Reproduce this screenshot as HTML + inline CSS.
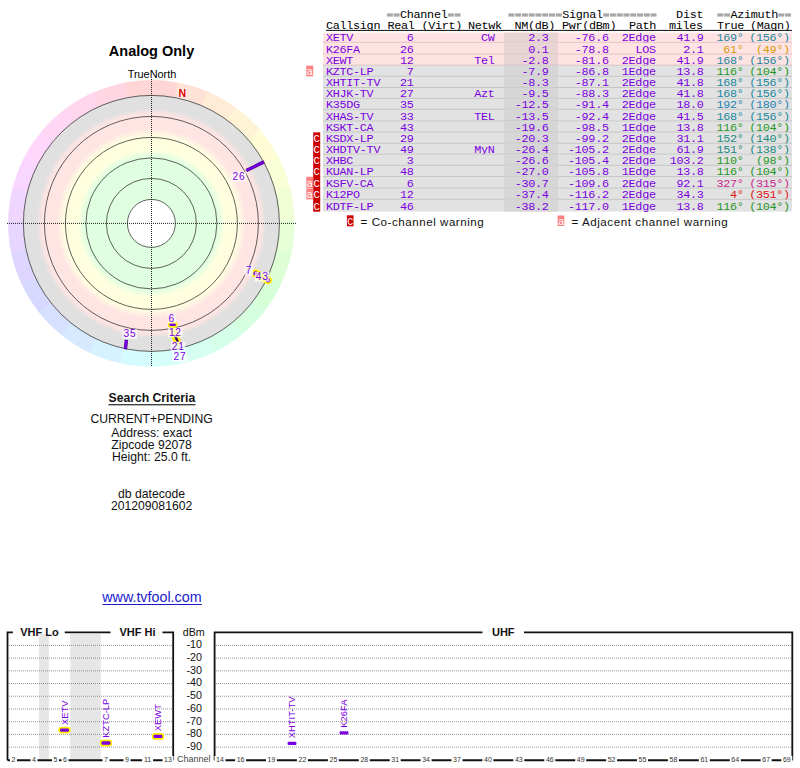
<!DOCTYPE html>
<html><head><meta charset="utf-8"><title>TV Fool</title>
<style>
html,body{margin:0;padding:0;background:#fff;width:800px;height:768px;overflow:hidden}
svg{position:absolute;left:0;top:0}
text{font-family:"Liberation Sans",sans-serif}
.m{font-family:"Liberation Mono",monospace}
</style></head><body>
<svg width="800" height="768" viewBox="0 0 800 768">
<defs>
<radialGradient id="bands" cx="151.4" cy="223.4" r="128" gradientUnits="userSpaceOnUse">
<stop offset="0" stop-color="#e0ffe0"/>
<stop offset="0.523" stop-color="#e0ffe0"/>
<stop offset="0.578" stop-color="#ffffe0"/>
<stop offset="0.68" stop-color="#ffffe0"/>
<stop offset="0.742" stop-color="#ffe4e4"/>
<stop offset="0.852" stop-color="#ffe4e4"/>
<stop offset="0.898" stop-color="#e0e0e0"/>
<stop offset="1" stop-color="#e0e0e0"/>
</radialGradient>
</defs>

<path d="M151.4,223.4 L176.28,82.28 A143.3,143.3 0 0 1 208.43,91.94 Z" fill="hsl(17,100%,92%)"/>
<path d="M151.4,223.4 L207.51,91.54 A143.3,143.3 0 0 1 236.64,108.21 Z" fill="hsl(30,100%,92%)"/>
<path d="M151.4,223.4 L235.83,107.62 A143.3,143.3 0 0 1 260.45,130.43 Z" fill="hsl(43,100%,92%)"/>
<path d="M151.4,223.4 L259.80,129.67 A143.3,143.3 0 0 1 278.62,157.45 Z" fill="hsl(56,100%,92%)"/>
<path d="M151.4,223.4 L278.16,156.57 A143.3,143.3 0 0 1 290.23,187.88 Z" fill="hsl(69,100%,92%)"/>
<path d="M151.4,223.4 L289.98,186.92 A143.3,143.3 0 0 1 294.66,220.15 Z" fill="hsl(82,100%,92%)"/>
<path d="M151.4,223.4 L294.64,219.15 A143.3,143.3 0 0 1 291.70,252.58 Z" fill="hsl(95,100%,92%)"/>
<path d="M151.4,223.4 L291.90,251.60 A143.3,143.3 0 0 1 281.48,283.51 Z" fill="hsl(108,100%,92%)"/>
<path d="M151.4,223.4 L281.90,282.60 A143.3,143.3 0 0 1 264.55,311.33 Z" fill="hsl(121,100%,92%)"/>
<path d="M151.4,223.4 L265.16,310.54 A143.3,143.3 0 0 1 241.78,334.61 Z" fill="hsl(134,100%,92%)"/>
<path d="M151.4,223.4 L242.55,333.97 A143.3,143.3 0 0 1 214.33,352.14 Z" fill="hsl(147,100%,92%)"/>
<path d="M151.4,223.4 L215.23,351.70 A143.3,143.3 0 0 1 183.64,363.03 Z" fill="hsl(160,100%,92%)"/>
<path d="M151.4,223.4 L184.61,362.80 A143.3,143.3 0 0 1 151.27,366.70 Z" fill="hsl(173,100%,92%)"/>
<path d="M151.4,223.4 L152.28,366.70 A143.3,143.3 0 0 1 118.92,362.97 Z" fill="hsl(186,100%,92%)"/>
<path d="M151.4,223.4 L119.90,363.19 A143.3,143.3 0 0 1 88.24,352.03 Z" fill="hsl(199,100%,92%)"/>
<path d="M151.4,223.4 L89.14,352.47 A143.3,143.3 0 0 1 60.83,334.45 Z" fill="hsl(212,100%,92%)"/>
<path d="M151.4,223.4 L61.61,335.08 A143.3,143.3 0 0 1 38.09,311.13 Z" fill="hsl(225,100%,92%)"/>
<path d="M151.4,223.4 L38.71,311.92 A143.3,143.3 0 0 1 21.21,283.28 Z" fill="hsl(238,100%,92%)"/>
<path d="M151.4,223.4 L21.63,284.19 A143.3,143.3 0 0 1 11.05,252.34 Z" fill="hsl(251,100%,92%)"/>
<path d="M151.4,223.4 L11.26,253.32 A143.3,143.3 0 0 1 8.14,219.90 Z" fill="hsl(264,100%,92%)"/>
<path d="M151.4,223.4 L8.12,220.90 A143.3,143.3 0 0 1 12.63,187.64 Z" fill="hsl(278,100%,92%)"/>
<path d="M151.4,223.4 L12.39,188.61 A143.3,143.3 0 0 1 24.29,157.23 Z" fill="hsl(291,100%,92%)"/>
<path d="M151.4,223.4 L23.83,158.12 A143.3,143.3 0 0 1 42.52,130.24 Z" fill="hsl(304,100%,92%)"/>
<path d="M151.4,223.4 L41.87,131.00 A143.3,143.3 0 0 1 66.36,108.06 Z" fill="hsl(317,100%,92%)"/>
<path d="M151.4,223.4 L65.56,108.66 A143.3,143.3 0 0 1 94.60,91.84 Z" fill="hsl(330,100%,92%)"/>
<path d="M151.4,223.4 L93.69,92.24 A143.3,143.3 0 0 1 125.78,82.41 Z" fill="hsl(343,100%,92%)"/>
<path d="M151.4,223.4 L124.79,82.59 A143.3,143.3 0 0 1 177.27,82.45 Z" fill="hsl(360,100%,92%)"/>
<circle cx="151.4" cy="223.4" r="128" fill="url(#bands)"/>
<circle cx="151.4" cy="223.4" r="24" fill="#fff"/>
<circle cx="151.4" cy="223.4" r="24" fill="none" stroke="#3a3a3a" stroke-width="0.8"/>
<circle cx="151.4" cy="223.4" r="45" fill="none" stroke="#3a3a3a" stroke-width="0.8"/>
<circle cx="151.4" cy="223.4" r="65.5" fill="none" stroke="#3a3a3a" stroke-width="0.8"/>
<circle cx="151.4" cy="223.4" r="86" fill="none" stroke="#3a3a3a" stroke-width="0.8"/>
<circle cx="151.4" cy="223.4" r="107" fill="none" stroke="#3a3a3a" stroke-width="0.8"/>
<circle cx="151.4" cy="223.4" r="128" fill="none" stroke="#3a3a3a" stroke-width="0.8"/>
<line x1="7" y1="223.4" x2="296" y2="223.4" stroke="#222" stroke-width="1" stroke-dasharray="1,1"/>
<line x1="151.5" y1="79" x2="151.5" y2="367" stroke="#222" stroke-width="1" stroke-dasharray="1,1"/>
<text x="151.5" y="55.5" text-anchor="middle" font-size="14.5" font-weight="bold">Analog Only</text>
<text x="152" y="77.6" text-anchor="middle" font-size="10.9">TrueNorth</text>
<rect x="178" y="88.6" width="8.8" height="9" fill="#fff" fill-opacity="0.5"/>
<text x="178.6" y="96.9" font-size="10.6" font-weight="bold" fill="#dd0000">N</text>
<line x1="246.3" y1="170.5" x2="264.0" y2="161.9" stroke="#4a0090" stroke-width="3.4" stroke-linecap="butt"/>
<line x1="246.5" y1="170.5" x2="263.8" y2="161.9" stroke="#7a00e0" stroke-width="2.2" stroke-linecap="butt"/>
<rect x="231.6" y="172.0" width="14.7" height="9.7" fill="#fff" fill-opacity="0.7"/>
<text x="232.6" y="180.2" font-size="10.2" letter-spacing="0.7" fill="#7a00e0">26</text>
<line x1="126.4" y1="339.8" x2="125.4" y2="349.2" stroke="#4a0090" stroke-width="3.4" stroke-linecap="butt"/>
<line x1="126.4" y1="340.2" x2="125.4" y2="348.8" stroke="#7a00e0" stroke-width="2.2" stroke-linecap="butt"/>
<rect x="122.6" y="329.2" width="14.7" height="9.7" fill="#fff" fill-opacity="0.7"/>
<text x="123.6" y="337.4" font-size="10.2" letter-spacing="0.7" fill="#7a00e0">35</text>
<line x1="255.3" y1="273.4" x2="268" y2="280.2" stroke="#ffee00" stroke-width="8" stroke-linecap="round"/>
<circle cx="255.4" cy="273.4" r="2.2" fill="#7a00e0"/>
<circle cx="268" cy="280.2" r="2.2" fill="#7a00e0"/>
<rect x="244.8" y="265.8" width="8.4" height="9.7" fill="#fff" fill-opacity="0.7"/>
<text x="245.8" y="274.0" font-size="10.2" letter-spacing="0.7" fill="#7a00e0">7</text>
<rect x="254.8" y="272.0" width="14.7" height="9.7" fill="#fff" fill-opacity="0.7"/>
<text x="255.8" y="280.2" font-size="10.2" letter-spacing="0.7" fill="#7a00e0">43</text>
<line x1="171" y1="324.8" x2="174.2" y2="324.8" stroke="#ffee00" stroke-width="6.5" stroke-linecap="round"/>
<line x1="173.8" y1="332" x2="177.2" y2="341.5" stroke="#ffee00" stroke-width="7.5" stroke-linecap="round"/>
<line x1="170.6" y1="324.8" x2="174.6" y2="324.8" stroke="#7a00e0" stroke-width="2.6" stroke-linecap="round"/>
<line x1="175" y1="336" x2="177.5" y2="341" stroke="#33006a" stroke-width="2.4" stroke-linecap="round"/>
<rect x="167.6" y="313.7" width="8.4" height="9.7" fill="#fff" fill-opacity="0.7"/>
<text x="168.6" y="321.9" font-size="10.2" letter-spacing="0.7" fill="#7a00e0">6</text>
<rect x="168.0" y="327.7" width="14.7" height="9.7" fill="#fff" fill-opacity="0.7"/>
<text x="169.0" y="335.9" font-size="10.2" letter-spacing="0.7" fill="#7a00e0">12</text>
<rect x="170.8" y="341.6" width="14.7" height="9.7" fill="#fff" fill-opacity="0.7"/>
<text x="171.8" y="349.8" font-size="10.2" letter-spacing="0.7" fill="#7a00e0">21</text>
<rect x="172.6" y="352.0" width="14.7" height="9.7" fill="#fff" fill-opacity="0.7"/>
<text x="173.6" y="360.2" font-size="10.2" letter-spacing="0.7" fill="#7a00e0">27</text>
<rect x="386.90" y="13.4" width="5.97" height="3.2" fill="#a8a8a8"/>
<rect x="393.67" y="13.4" width="5.97" height="3.2" fill="#a8a8a8"/>
<text class="m" x="400.04" y="17.60" font-size="11.8" letter-spacing="-0.31" fill="#000" text-anchor="start">Channel</text>
<rect x="447.83" y="13.4" width="5.97" height="3.2" fill="#a8a8a8"/>
<rect x="454.60" y="13.4" width="5.97" height="3.2" fill="#a8a8a8"/>
<rect x="508.40" y="13.4" width="5.97" height="3.2" fill="#a8a8a8"/>
<rect x="515.17" y="13.4" width="5.97" height="3.2" fill="#a8a8a8"/>
<rect x="521.94" y="13.4" width="5.97" height="3.2" fill="#a8a8a8"/>
<rect x="528.71" y="13.4" width="5.97" height="3.2" fill="#a8a8a8"/>
<rect x="535.48" y="13.4" width="5.97" height="3.2" fill="#a8a8a8"/>
<rect x="542.25" y="13.4" width="5.97" height="3.2" fill="#a8a8a8"/>
<rect x="549.02" y="13.4" width="5.97" height="3.2" fill="#a8a8a8"/>
<rect x="555.79" y="13.4" width="5.97" height="3.2" fill="#a8a8a8"/>
<text class="m" x="562.16" y="17.60" font-size="11.8" letter-spacing="-0.31" fill="#000" text-anchor="start">Signal</text>
<rect x="603.18" y="13.4" width="5.97" height="3.2" fill="#a8a8a8"/>
<rect x="609.95" y="13.4" width="5.97" height="3.2" fill="#a8a8a8"/>
<rect x="616.72" y="13.4" width="5.97" height="3.2" fill="#a8a8a8"/>
<rect x="623.49" y="13.4" width="5.97" height="3.2" fill="#a8a8a8"/>
<rect x="630.26" y="13.4" width="5.97" height="3.2" fill="#a8a8a8"/>
<rect x="637.03" y="13.4" width="5.97" height="3.2" fill="#a8a8a8"/>
<rect x="643.80" y="13.4" width="5.97" height="3.2" fill="#a8a8a8"/>
<rect x="650.57" y="13.4" width="5.97" height="3.2" fill="#a8a8a8"/>
<text class="m" x="703.19" y="17.60" font-size="11.8" letter-spacing="-0.31" fill="#000" text-anchor="end">Dist</text>
<rect x="717.40" y="13.4" width="5.97" height="3.2" fill="#a8a8a8"/>
<rect x="724.17" y="13.4" width="5.97" height="3.2" fill="#a8a8a8"/>
<text class="m" x="730.54" y="17.60" font-size="11.8" letter-spacing="-0.31" fill="#000" text-anchor="start">Azimuth</text>
<rect x="778.33" y="13.4" width="5.97" height="3.2" fill="#a8a8a8"/>
<rect x="785.10" y="13.4" width="5.97" height="3.2" fill="#a8a8a8"/>
<text class="m" x="326.00" y="28.70" font-size="11.8" letter-spacing="-0.31" fill="#000" text-anchor="start">Callsign</text>
<text class="m" x="387.50" y="28.70" font-size="11.8" letter-spacing="-0.31" fill="#000" text-anchor="start">Real</text>
<text class="m" x="421.50" y="28.70" font-size="11.8" letter-spacing="-0.31" fill="#000" text-anchor="start">(Virt)</text>
<text class="m" x="468.00" y="28.70" font-size="11.8" letter-spacing="-0.31" fill="#000" text-anchor="start">Netwk</text>
<text class="m" x="514.50" y="28.70" font-size="11.8" letter-spacing="-0.31" fill="#000" text-anchor="start">NM(dB)</text>
<text class="m" x="562.00" y="28.70" font-size="11.8" letter-spacing="-0.31" fill="#000" text-anchor="start">Pwr(dBm)</text>
<text class="m" x="629.00" y="28.70" font-size="11.8" letter-spacing="-0.31" fill="#000" text-anchor="start">Path</text>
<text class="m" x="669.00" y="28.70" font-size="11.8" letter-spacing="-0.31" fill="#000" text-anchor="start">miles</text>
<text class="m" x="717.00" y="28.70" font-size="11.8" letter-spacing="-0.31" fill="#000" text-anchor="start">True</text>
<text class="m" x="750.00" y="28.70" font-size="11.8" letter-spacing="-0.31" fill="#000" text-anchor="start">(Magn)</text>
<rect x="326" y="29.9" width="466" height="1.1" fill="#222"/>
<rect x="323" y="32.65" width="469" height="10.25" fill="#ffe2e2"/>
<rect x="504" y="32.65" width="54" height="10.25" fill="#e8d4d4"/>
<rect x="323" y="41.90" width="469" height="1.1" fill="#c4aaaa"/>
<text class="m" x="326.00" y="41.10" font-size="11.8" letter-spacing="-0.31" fill="#7a00e0" text-anchor="start">XETV</text>
<text class="m" x="413.49" y="41.10" font-size="11.8" letter-spacing="-0.31" fill="#7a00e0" text-anchor="end">6</text>
<text class="m" x="494.49" y="41.10" font-size="11.8" letter-spacing="-0.31" fill="#7a00e0" text-anchor="end">CW</text>
<text class="m" x="548.49" y="41.10" font-size="11.8" letter-spacing="-0.31" fill="#7a00e0" text-anchor="end">2.3</text>
<text class="m" x="608.69" y="41.10" font-size="11.8" letter-spacing="-0.31" fill="#7a00e0" text-anchor="end">-76.6</text>
<text class="m" x="655.69" y="41.10" font-size="11.8" letter-spacing="-0.31" fill="#7a00e0" text-anchor="end">2Edge</text>
<text class="m" x="703.49" y="41.10" font-size="11.8" letter-spacing="-0.31" fill="#7a00e0" text-anchor="end">41.9</text>
<text class="m" x="743.49" y="41.10" font-size="11.8" letter-spacing="-0.31" fill="#2088a0" text-anchor="end">169°</text>
<text class="m" x="789.89" y="41.10" font-size="11.8" letter-spacing="-0.31" fill="#2088a0" text-anchor="end">(156°)</text>
<rect x="323" y="42.40" width="469" height="12.40" fill="#ffe2e2"/>
<rect x="504" y="42.40" width="54" height="12.40" fill="#e8d4d4"/>
<rect x="323" y="53.80" width="469" height="1.1" fill="#c4aaaa"/>
<text class="m" x="326.00" y="53.00" font-size="11.8" letter-spacing="-0.31" fill="#7a00e0" text-anchor="start">K26FA</text>
<text class="m" x="413.49" y="53.00" font-size="11.8" letter-spacing="-0.31" fill="#7a00e0" text-anchor="end">26</text>
<text class="m" x="548.49" y="53.00" font-size="11.8" letter-spacing="-0.31" fill="#7a00e0" text-anchor="end">0.1</text>
<text class="m" x="608.69" y="53.00" font-size="11.8" letter-spacing="-0.31" fill="#7a00e0" text-anchor="end">-78.8</text>
<text class="m" x="655.69" y="53.00" font-size="11.8" letter-spacing="-0.31" fill="#7a00e0" text-anchor="end">LOS</text>
<text class="m" x="703.49" y="53.00" font-size="11.8" letter-spacing="-0.31" fill="#7a00e0" text-anchor="end">2.1</text>
<text class="m" x="743.49" y="53.00" font-size="11.8" letter-spacing="-0.31" fill="#d49a00" text-anchor="end">61°</text>
<text class="m" x="789.89" y="53.00" font-size="11.8" letter-spacing="-0.31" fill="#d49a00" text-anchor="end">(49°)</text>
<rect x="323" y="54.30" width="469" height="11.50" fill="#ffe2e2"/>
<rect x="504" y="54.30" width="54" height="11.50" fill="#e8d4d4"/>
<rect x="323" y="64.80" width="469" height="1.1" fill="#c4aaaa"/>
<text class="m" x="326.00" y="64.00" font-size="11.8" letter-spacing="-0.31" fill="#7a00e0" text-anchor="start">XEWT</text>
<text class="m" x="413.49" y="64.00" font-size="11.8" letter-spacing="-0.31" fill="#7a00e0" text-anchor="end">12</text>
<text class="m" x="494.49" y="64.00" font-size="11.8" letter-spacing="-0.31" fill="#7a00e0" text-anchor="end">Tel</text>
<text class="m" x="548.49" y="64.00" font-size="11.8" letter-spacing="-0.31" fill="#7a00e0" text-anchor="end">-2.8</text>
<text class="m" x="608.69" y="64.00" font-size="11.8" letter-spacing="-0.31" fill="#7a00e0" text-anchor="end">-81.6</text>
<text class="m" x="655.69" y="64.00" font-size="11.8" letter-spacing="-0.31" fill="#7a00e0" text-anchor="end">2Edge</text>
<text class="m" x="703.49" y="64.00" font-size="11.8" letter-spacing="-0.31" fill="#7a00e0" text-anchor="end">41.9</text>
<text class="m" x="743.49" y="64.00" font-size="11.8" letter-spacing="-0.31" fill="#2088a0" text-anchor="end">168°</text>
<text class="m" x="789.89" y="64.00" font-size="11.8" letter-spacing="-0.31" fill="#2088a0" text-anchor="end">(156°)</text>
<rect x="323" y="65.30" width="469" height="11.55" fill="#e2e2e2"/>
<rect x="504" y="65.30" width="54" height="11.55" fill="#d6d6d6"/>
<rect x="323" y="75.85" width="469" height="1.1" fill="#adadad"/>
<text class="m" x="326.00" y="75.05" font-size="11.8" letter-spacing="-0.31" fill="#7a00e0" text-anchor="start">KZTC-LP</text>
<text class="m" x="413.49" y="75.05" font-size="11.8" letter-spacing="-0.31" fill="#7a00e0" text-anchor="end">7</text>
<text class="m" x="548.49" y="75.05" font-size="11.8" letter-spacing="-0.31" fill="#7a00e0" text-anchor="end">-7.9</text>
<text class="m" x="608.69" y="75.05" font-size="11.8" letter-spacing="-0.31" fill="#7a00e0" text-anchor="end">-86.8</text>
<text class="m" x="655.69" y="75.05" font-size="11.8" letter-spacing="-0.31" fill="#7a00e0" text-anchor="end">1Edge</text>
<text class="m" x="703.49" y="75.05" font-size="11.8" letter-spacing="-0.31" fill="#7a00e0" text-anchor="end">13.8</text>
<text class="m" x="743.49" y="75.05" font-size="11.8" letter-spacing="-0.31" fill="#1e961e" text-anchor="end">116°</text>
<text class="m" x="789.89" y="75.05" font-size="11.8" letter-spacing="-0.31" fill="#1e961e" text-anchor="end">(104°)</text>
<rect x="306.3" y="65.60" width="6.9" height="10.75" fill="#ff8080"/>
<text x="306.8" y="75.05" font-size="10.5" fill="#fff">a</text>
<rect x="323" y="76.35" width="469" height="11.75" fill="#e2e2e2"/>
<rect x="504" y="76.35" width="54" height="11.75" fill="#d6d6d6"/>
<rect x="323" y="87.10" width="469" height="1.1" fill="#adadad"/>
<text class="m" x="326.00" y="86.30" font-size="11.8" letter-spacing="-0.31" fill="#7a00e0" text-anchor="start">XHTIT-TV</text>
<text class="m" x="413.49" y="86.30" font-size="11.8" letter-spacing="-0.31" fill="#7a00e0" text-anchor="end">21</text>
<text class="m" x="548.49" y="86.30" font-size="11.8" letter-spacing="-0.31" fill="#7a00e0" text-anchor="end">-8.3</text>
<text class="m" x="608.69" y="86.30" font-size="11.8" letter-spacing="-0.31" fill="#7a00e0" text-anchor="end">-87.1</text>
<text class="m" x="655.69" y="86.30" font-size="11.8" letter-spacing="-0.31" fill="#7a00e0" text-anchor="end">2Edge</text>
<text class="m" x="703.49" y="86.30" font-size="11.8" letter-spacing="-0.31" fill="#7a00e0" text-anchor="end">41.8</text>
<text class="m" x="743.49" y="86.30" font-size="11.8" letter-spacing="-0.31" fill="#2088a0" text-anchor="end">168°</text>
<text class="m" x="789.89" y="86.30" font-size="11.8" letter-spacing="-0.31" fill="#2088a0" text-anchor="end">(156°)</text>
<rect x="323" y="87.60" width="469" height="11.30" fill="#e2e2e2"/>
<rect x="504" y="87.60" width="54" height="11.30" fill="#d6d6d6"/>
<rect x="323" y="97.90" width="469" height="1.1" fill="#adadad"/>
<text class="m" x="326.00" y="97.10" font-size="11.8" letter-spacing="-0.31" fill="#7a00e0" text-anchor="start">XHJK-TV</text>
<text class="m" x="413.49" y="97.10" font-size="11.8" letter-spacing="-0.31" fill="#7a00e0" text-anchor="end">27</text>
<text class="m" x="494.49" y="97.10" font-size="11.8" letter-spacing="-0.31" fill="#7a00e0" text-anchor="end">Azt</text>
<text class="m" x="548.49" y="97.10" font-size="11.8" letter-spacing="-0.31" fill="#7a00e0" text-anchor="end">-9.5</text>
<text class="m" x="608.69" y="97.10" font-size="11.8" letter-spacing="-0.31" fill="#7a00e0" text-anchor="end">-88.3</text>
<text class="m" x="655.69" y="97.10" font-size="11.8" letter-spacing="-0.31" fill="#7a00e0" text-anchor="end">2Edge</text>
<text class="m" x="703.49" y="97.10" font-size="11.8" letter-spacing="-0.31" fill="#7a00e0" text-anchor="end">41.8</text>
<text class="m" x="743.49" y="97.10" font-size="11.8" letter-spacing="-0.31" fill="#2088a0" text-anchor="end">168°</text>
<text class="m" x="789.89" y="97.10" font-size="11.8" letter-spacing="-0.31" fill="#2088a0" text-anchor="end">(156°)</text>
<rect x="323" y="98.40" width="469" height="11.50" fill="#e2e2e2"/>
<rect x="504" y="98.40" width="54" height="11.50" fill="#d6d6d6"/>
<rect x="323" y="108.90" width="469" height="1.1" fill="#adadad"/>
<text class="m" x="326.00" y="108.10" font-size="11.8" letter-spacing="-0.31" fill="#7a00e0" text-anchor="start">K35DG</text>
<text class="m" x="413.49" y="108.10" font-size="11.8" letter-spacing="-0.31" fill="#7a00e0" text-anchor="end">35</text>
<text class="m" x="548.49" y="108.10" font-size="11.8" letter-spacing="-0.31" fill="#7a00e0" text-anchor="end">-12.5</text>
<text class="m" x="608.69" y="108.10" font-size="11.8" letter-spacing="-0.31" fill="#7a00e0" text-anchor="end">-91.4</text>
<text class="m" x="655.69" y="108.10" font-size="11.8" letter-spacing="-0.31" fill="#7a00e0" text-anchor="end">2Edge</text>
<text class="m" x="703.49" y="108.10" font-size="11.8" letter-spacing="-0.31" fill="#7a00e0" text-anchor="end">18.0</text>
<text class="m" x="743.49" y="108.10" font-size="11.8" letter-spacing="-0.31" fill="#1f7fb0" text-anchor="end">192°</text>
<text class="m" x="789.89" y="108.10" font-size="11.8" letter-spacing="-0.31" fill="#1f7fb0" text-anchor="end">(180°)</text>
<rect x="323" y="109.40" width="469" height="12.35" fill="#e2e2e2"/>
<rect x="504" y="109.40" width="54" height="12.35" fill="#d6d6d6"/>
<rect x="323" y="120.75" width="469" height="1.1" fill="#adadad"/>
<text class="m" x="326.00" y="119.95" font-size="11.8" letter-spacing="-0.31" fill="#7a00e0" text-anchor="start">XHAS-TV</text>
<text class="m" x="413.49" y="119.95" font-size="11.8" letter-spacing="-0.31" fill="#7a00e0" text-anchor="end">33</text>
<text class="m" x="494.49" y="119.95" font-size="11.8" letter-spacing="-0.31" fill="#7a00e0" text-anchor="end">TEL</text>
<text class="m" x="548.49" y="119.95" font-size="11.8" letter-spacing="-0.31" fill="#7a00e0" text-anchor="end">-13.5</text>
<text class="m" x="608.69" y="119.95" font-size="11.8" letter-spacing="-0.31" fill="#7a00e0" text-anchor="end">-92.4</text>
<text class="m" x="655.69" y="119.95" font-size="11.8" letter-spacing="-0.31" fill="#7a00e0" text-anchor="end">2Edge</text>
<text class="m" x="703.49" y="119.95" font-size="11.8" letter-spacing="-0.31" fill="#7a00e0" text-anchor="end">41.5</text>
<text class="m" x="743.49" y="119.95" font-size="11.8" letter-spacing="-0.31" fill="#2088a0" text-anchor="end">168°</text>
<text class="m" x="789.89" y="119.95" font-size="11.8" letter-spacing="-0.31" fill="#2088a0" text-anchor="end">(156°)</text>
<rect x="323" y="121.25" width="469" height="11.55" fill="#e2e2e2"/>
<rect x="504" y="121.25" width="54" height="11.55" fill="#d6d6d6"/>
<rect x="323" y="131.80" width="469" height="1.1" fill="#adadad"/>
<text class="m" x="326.00" y="131.00" font-size="11.8" letter-spacing="-0.31" fill="#7a00e0" text-anchor="start">KSKT-CA</text>
<text class="m" x="413.49" y="131.00" font-size="11.8" letter-spacing="-0.31" fill="#7a00e0" text-anchor="end">43</text>
<text class="m" x="548.49" y="131.00" font-size="11.8" letter-spacing="-0.31" fill="#7a00e0" text-anchor="end">-19.6</text>
<text class="m" x="608.69" y="131.00" font-size="11.8" letter-spacing="-0.31" fill="#7a00e0" text-anchor="end">-98.5</text>
<text class="m" x="655.69" y="131.00" font-size="11.8" letter-spacing="-0.31" fill="#7a00e0" text-anchor="end">1Edge</text>
<text class="m" x="703.49" y="131.00" font-size="11.8" letter-spacing="-0.31" fill="#7a00e0" text-anchor="end">13.8</text>
<text class="m" x="743.49" y="131.00" font-size="11.8" letter-spacing="-0.31" fill="#1e961e" text-anchor="end">116°</text>
<text class="m" x="789.89" y="131.00" font-size="11.8" letter-spacing="-0.31" fill="#1e961e" text-anchor="end">(104°)</text>
<rect x="323" y="132.30" width="469" height="11.60" fill="#e2e2e2"/>
<rect x="504" y="132.30" width="54" height="11.60" fill="#d6d6d6"/>
<rect x="323" y="142.90" width="469" height="1.1" fill="#adadad"/>
<text class="m" x="326.00" y="142.10" font-size="11.8" letter-spacing="-0.31" fill="#7a00e0" text-anchor="start">KSDX-LP</text>
<text class="m" x="413.49" y="142.10" font-size="11.8" letter-spacing="-0.31" fill="#7a00e0" text-anchor="end">29</text>
<text class="m" x="548.49" y="142.10" font-size="11.8" letter-spacing="-0.31" fill="#7a00e0" text-anchor="end">-20.3</text>
<text class="m" x="608.69" y="142.10" font-size="11.8" letter-spacing="-0.31" fill="#7a00e0" text-anchor="end">-99.2</text>
<text class="m" x="655.69" y="142.10" font-size="11.8" letter-spacing="-0.31" fill="#7a00e0" text-anchor="end">2Edge</text>
<text class="m" x="703.49" y="142.10" font-size="11.8" letter-spacing="-0.31" fill="#7a00e0" text-anchor="end">31.1</text>
<text class="m" x="743.49" y="142.10" font-size="11.8" letter-spacing="-0.31" fill="#1a8c7c" text-anchor="end">152°</text>
<text class="m" x="789.89" y="142.10" font-size="11.8" letter-spacing="-0.31" fill="#1a8c7c" text-anchor="end">(140°)</text>
<rect x="313.2" y="132.30" width="7" height="11.70" fill="#cc0000"/>
<text class="m" x="313.50" y="142.10" font-size="10.5" letter-spacing="0" fill="#fff" text-anchor="start">C</text>
<rect x="323" y="143.40" width="469" height="11.40" fill="#e2e2e2"/>
<rect x="504" y="143.40" width="54" height="11.40" fill="#d6d6d6"/>
<rect x="323" y="153.80" width="469" height="1.1" fill="#adadad"/>
<text class="m" x="326.00" y="153.00" font-size="11.8" letter-spacing="-0.31" fill="#7a00e0" text-anchor="start">XHDTV-TV</text>
<text class="m" x="413.49" y="153.00" font-size="11.8" letter-spacing="-0.31" fill="#7a00e0" text-anchor="end">49</text>
<text class="m" x="494.49" y="153.00" font-size="11.8" letter-spacing="-0.31" fill="#7a00e0" text-anchor="end">MyN</text>
<text class="m" x="548.49" y="153.00" font-size="11.8" letter-spacing="-0.31" fill="#7a00e0" text-anchor="end">-26.4</text>
<text class="m" x="608.69" y="153.00" font-size="11.8" letter-spacing="-0.31" fill="#7a00e0" text-anchor="end">-105.2</text>
<text class="m" x="655.69" y="153.00" font-size="11.8" letter-spacing="-0.31" fill="#7a00e0" text-anchor="end">2Edge</text>
<text class="m" x="703.49" y="153.00" font-size="11.8" letter-spacing="-0.31" fill="#7a00e0" text-anchor="end">61.9</text>
<text class="m" x="743.49" y="153.00" font-size="11.8" letter-spacing="-0.31" fill="#1a8c7c" text-anchor="end">151°</text>
<text class="m" x="789.89" y="153.00" font-size="11.8" letter-spacing="-0.31" fill="#1a8c7c" text-anchor="end">(138°)</text>
<rect x="313.2" y="143.40" width="7" height="11.50" fill="#cc0000"/>
<text class="m" x="313.50" y="153.00" font-size="10.5" letter-spacing="0" fill="#fff" text-anchor="start">C</text>
<rect x="323" y="154.30" width="469" height="11.60" fill="#e2e2e2"/>
<rect x="504" y="154.30" width="54" height="11.60" fill="#d6d6d6"/>
<rect x="323" y="164.90" width="469" height="1.1" fill="#adadad"/>
<text class="m" x="326.00" y="164.10" font-size="11.8" letter-spacing="-0.31" fill="#7a00e0" text-anchor="start">XHBC</text>
<text class="m" x="413.49" y="164.10" font-size="11.8" letter-spacing="-0.31" fill="#7a00e0" text-anchor="end">3</text>
<text class="m" x="548.49" y="164.10" font-size="11.8" letter-spacing="-0.31" fill="#7a00e0" text-anchor="end">-26.6</text>
<text class="m" x="608.69" y="164.10" font-size="11.8" letter-spacing="-0.31" fill="#7a00e0" text-anchor="end">-105.4</text>
<text class="m" x="655.69" y="164.10" font-size="11.8" letter-spacing="-0.31" fill="#7a00e0" text-anchor="end">2Edge</text>
<text class="m" x="703.49" y="164.10" font-size="11.8" letter-spacing="-0.31" fill="#7a00e0" text-anchor="end">103.2</text>
<text class="m" x="743.49" y="164.10" font-size="11.8" letter-spacing="-0.31" fill="#1e961e" text-anchor="end">110°</text>
<text class="m" x="789.89" y="164.10" font-size="11.8" letter-spacing="-0.31" fill="#1e961e" text-anchor="end">(98°)</text>
<rect x="313.2" y="154.30" width="7" height="11.70" fill="#cc0000"/>
<text class="m" x="313.50" y="164.10" font-size="10.5" letter-spacing="0" fill="#fff" text-anchor="start">C</text>
<rect x="323" y="165.40" width="469" height="11.60" fill="#e2e2e2"/>
<rect x="504" y="165.40" width="54" height="11.60" fill="#d6d6d6"/>
<rect x="323" y="176.00" width="469" height="1.1" fill="#adadad"/>
<text class="m" x="326.00" y="175.20" font-size="11.8" letter-spacing="-0.31" fill="#7a00e0" text-anchor="start">KUAN-LP</text>
<text class="m" x="413.49" y="175.20" font-size="11.8" letter-spacing="-0.31" fill="#7a00e0" text-anchor="end">48</text>
<text class="m" x="548.49" y="175.20" font-size="11.8" letter-spacing="-0.31" fill="#7a00e0" text-anchor="end">-27.0</text>
<text class="m" x="608.69" y="175.20" font-size="11.8" letter-spacing="-0.31" fill="#7a00e0" text-anchor="end">-105.8</text>
<text class="m" x="655.69" y="175.20" font-size="11.8" letter-spacing="-0.31" fill="#7a00e0" text-anchor="end">1Edge</text>
<text class="m" x="703.49" y="175.20" font-size="11.8" letter-spacing="-0.31" fill="#7a00e0" text-anchor="end">13.8</text>
<text class="m" x="743.49" y="175.20" font-size="11.8" letter-spacing="-0.31" fill="#1e961e" text-anchor="end">116°</text>
<text class="m" x="789.89" y="175.20" font-size="11.8" letter-spacing="-0.31" fill="#1e961e" text-anchor="end">(104°)</text>
<rect x="313.2" y="165.40" width="7" height="11.70" fill="#cc0000"/>
<text class="m" x="313.50" y="175.20" font-size="10.5" letter-spacing="0" fill="#fff" text-anchor="start">C</text>
<rect x="323" y="176.50" width="469" height="12.30" fill="#e2e2e2"/>
<rect x="504" y="176.50" width="54" height="12.30" fill="#d6d6d6"/>
<rect x="323" y="187.80" width="469" height="1.1" fill="#adadad"/>
<text class="m" x="326.00" y="187.00" font-size="11.8" letter-spacing="-0.31" fill="#7a00e0" text-anchor="start">KSFV-CA</text>
<text class="m" x="413.49" y="187.00" font-size="11.8" letter-spacing="-0.31" fill="#7a00e0" text-anchor="end">6</text>
<text class="m" x="548.49" y="187.00" font-size="11.8" letter-spacing="-0.31" fill="#7a00e0" text-anchor="end">-30.7</text>
<text class="m" x="608.69" y="187.00" font-size="11.8" letter-spacing="-0.31" fill="#7a00e0" text-anchor="end">-109.6</text>
<text class="m" x="655.69" y="187.00" font-size="11.8" letter-spacing="-0.31" fill="#7a00e0" text-anchor="end">2Edge</text>
<text class="m" x="703.49" y="187.00" font-size="11.8" letter-spacing="-0.31" fill="#7a00e0" text-anchor="end">92.1</text>
<text class="m" x="743.49" y="187.00" font-size="11.8" letter-spacing="-0.31" fill="#c81e8c" text-anchor="end">327°</text>
<text class="m" x="789.89" y="187.00" font-size="11.8" letter-spacing="-0.31" fill="#c81e8c" text-anchor="end">(315°)</text>
<rect x="313.2" y="176.50" width="7" height="12.40" fill="#cc0000"/>
<text class="m" x="313.50" y="187.00" font-size="10.5" letter-spacing="0" fill="#fff" text-anchor="start">C</text>
<rect x="306.3" y="176.80" width="6.9" height="11.50" fill="#ff8080"/>
<text x="306.8" y="187.00" font-size="10.5" fill="#fff">a</text>
<rect x="323" y="188.30" width="469" height="11.60" fill="#e2e2e2"/>
<rect x="504" y="188.30" width="54" height="11.60" fill="#d6d6d6"/>
<rect x="323" y="198.90" width="469" height="1.1" fill="#adadad"/>
<text class="m" x="326.00" y="198.10" font-size="11.8" letter-spacing="-0.31" fill="#7a00e0" text-anchor="start">K12PO</text>
<text class="m" x="413.49" y="198.10" font-size="11.8" letter-spacing="-0.31" fill="#7a00e0" text-anchor="end">12</text>
<text class="m" x="548.49" y="198.10" font-size="11.8" letter-spacing="-0.31" fill="#7a00e0" text-anchor="end">-37.4</text>
<text class="m" x="608.69" y="198.10" font-size="11.8" letter-spacing="-0.31" fill="#7a00e0" text-anchor="end">-116.2</text>
<text class="m" x="655.69" y="198.10" font-size="11.8" letter-spacing="-0.31" fill="#7a00e0" text-anchor="end">2Edge</text>
<text class="m" x="703.49" y="198.10" font-size="11.8" letter-spacing="-0.31" fill="#7a00e0" text-anchor="end">34.3</text>
<text class="m" x="743.49" y="198.10" font-size="11.8" letter-spacing="-0.31" fill="#dd1515" text-anchor="end">4°</text>
<text class="m" x="789.89" y="198.10" font-size="11.8" letter-spacing="-0.31" fill="#dd1515" text-anchor="end">(351°)</text>
<rect x="313.2" y="188.30" width="7" height="11.70" fill="#cc0000"/>
<text class="m" x="313.50" y="198.10" font-size="10.5" letter-spacing="0" fill="#fff" text-anchor="start">C</text>
<rect x="306.3" y="188.60" width="6.9" height="10.80" fill="#ff8080"/>
<text x="306.8" y="198.10" font-size="10.5" fill="#fff">a</text>
<rect x="323" y="199.40" width="469" height="12.20" fill="#e2e2e2"/>
<rect x="504" y="199.40" width="54" height="12.20" fill="#d6d6d6"/>
<text class="m" x="326.00" y="209.80" font-size="11.8" letter-spacing="-0.31" fill="#7a00e0" text-anchor="start">KDTF-LP</text>
<text class="m" x="413.49" y="209.80" font-size="11.8" letter-spacing="-0.31" fill="#7a00e0" text-anchor="end">46</text>
<text class="m" x="548.49" y="209.80" font-size="11.8" letter-spacing="-0.31" fill="#7a00e0" text-anchor="end">-38.2</text>
<text class="m" x="608.69" y="209.80" font-size="11.8" letter-spacing="-0.31" fill="#7a00e0" text-anchor="end">-117.0</text>
<text class="m" x="655.69" y="209.80" font-size="11.8" letter-spacing="-0.31" fill="#7a00e0" text-anchor="end">1Edge</text>
<text class="m" x="703.49" y="209.80" font-size="11.8" letter-spacing="-0.31" fill="#7a00e0" text-anchor="end">13.8</text>
<text class="m" x="743.49" y="209.80" font-size="11.8" letter-spacing="-0.31" fill="#1e961e" text-anchor="end">116°</text>
<text class="m" x="789.89" y="209.80" font-size="11.8" letter-spacing="-0.31" fill="#1e961e" text-anchor="end">(104°)</text>
<rect x="313.2" y="199.40" width="7" height="12.30" fill="#cc0000"/>
<text class="m" x="313.50" y="209.80" font-size="10.5" letter-spacing="0" fill="#fff" text-anchor="start">C</text>
<rect x="346.9" y="215.3" width="6.6" height="11" fill="#cc0000"/>
<text class="m" x="347.2" y="225.2" font-size="10" fill="#fff">C</text>
<text x="360.6" y="226.0" font-size="11.6" letter-spacing="0.53" fill="#111">= Co-channel warning</text>
<rect x="557.6" y="215.5" width="6.7" height="10.5" fill="#ff8080"/>
<text x="558.2" y="225.0" font-size="10.5" fill="#fff">a</text>
<text x="571.4" y="226.0" font-size="11.6" letter-spacing="0.57" fill="#111">= Adjacent channel warning</text>
<text x="151.9" y="401.5" text-anchor="middle" font-size="12.2" font-weight="bold" fill="#111">Search Criteria</text>
<rect x="108.5" y="404.2" width="87" height="1.1" fill="#111"/>
<text x="151.6" y="423.4" text-anchor="middle" font-size="12.2" fill="#111">CURRENT+PENDING</text>
<text x="151.6" y="437.0" text-anchor="middle" font-size="12.2" fill="#111">Address: exact</text>
<text x="151.6" y="448.8" text-anchor="middle" font-size="12.2" fill="#111">Zipcode 92078</text>
<text x="151.6" y="460.6" text-anchor="middle" font-size="12.2" fill="#111">Height: 25.0 ft.</text>
<text x="151.6" y="497.5" text-anchor="middle" font-size="12.2" fill="#111">db datecode</text>
<text x="151.6" y="509.6" text-anchor="middle" font-size="12.2" fill="#111">201209081602</text>
<text x="151.9" y="601.5" text-anchor="middle" font-size="14.3" fill="#1a1acc">www.tvfool.com</text>
<rect x="102.5" y="604" width="99.3" height="1" fill="#1a1acc"/>
<rect x="38.9" y="634" width="10" height="126" fill="#e6e6e6"/>
<rect x="70.2" y="634" width="30.6" height="126" fill="#e6e6e6"/>
<line x1="9" y1="645.40" x2="172" y2="645.40" stroke="#777" stroke-width="0.8" stroke-dasharray="1,1"/>
<line x1="216" y1="645.40" x2="791.5" y2="645.40" stroke="#777" stroke-width="0.8" stroke-dasharray="1,1"/>
<line x1="9" y1="658.11" x2="172" y2="658.11" stroke="#777" stroke-width="0.8" stroke-dasharray="1,1"/>
<line x1="216" y1="658.11" x2="791.5" y2="658.11" stroke="#777" stroke-width="0.8" stroke-dasharray="1,1"/>
<line x1="9" y1="670.82" x2="172" y2="670.82" stroke="#777" stroke-width="0.8" stroke-dasharray="1,1"/>
<line x1="216" y1="670.82" x2="791.5" y2="670.82" stroke="#777" stroke-width="0.8" stroke-dasharray="1,1"/>
<line x1="9" y1="683.53" x2="172" y2="683.53" stroke="#777" stroke-width="0.8" stroke-dasharray="1,1"/>
<line x1="216" y1="683.53" x2="791.5" y2="683.53" stroke="#777" stroke-width="0.8" stroke-dasharray="1,1"/>
<line x1="9" y1="696.24" x2="172" y2="696.24" stroke="#777" stroke-width="0.8" stroke-dasharray="1,1"/>
<line x1="216" y1="696.24" x2="791.5" y2="696.24" stroke="#777" stroke-width="0.8" stroke-dasharray="1,1"/>
<line x1="9" y1="708.95" x2="172" y2="708.95" stroke="#777" stroke-width="0.8" stroke-dasharray="1,1"/>
<line x1="216" y1="708.95" x2="791.5" y2="708.95" stroke="#777" stroke-width="0.8" stroke-dasharray="1,1"/>
<line x1="9" y1="721.66" x2="172" y2="721.66" stroke="#777" stroke-width="0.8" stroke-dasharray="1,1"/>
<line x1="216" y1="721.66" x2="791.5" y2="721.66" stroke="#777" stroke-width="0.8" stroke-dasharray="1,1"/>
<line x1="9" y1="734.37" x2="172" y2="734.37" stroke="#777" stroke-width="0.8" stroke-dasharray="1,1"/>
<line x1="216" y1="734.37" x2="791.5" y2="734.37" stroke="#777" stroke-width="0.8" stroke-dasharray="1,1"/>
<line x1="9" y1="747.08" x2="172" y2="747.08" stroke="#777" stroke-width="0.8" stroke-dasharray="1,1"/>
<line x1="216" y1="747.08" x2="791.5" y2="747.08" stroke="#777" stroke-width="0.8" stroke-dasharray="1,1"/>
<path d="M7.5,760.3 V632.4 H12.9" fill="none" stroke="#111" stroke-width="1.8"/>
<line x1="64.7" y1="632.4" x2="110.5" y2="632.4" stroke="#111" stroke-width="1.8"/>
<path d="M162.5,632.4 H173.2 V760.3" fill="none" stroke="#111" stroke-width="1.8"/>
<text x="39.4" y="635.8" text-anchor="middle" font-size="11" font-weight="bold" fill="#111">VHF Lo</text>
<text x="137.5" y="635.8" text-anchor="middle" font-size="11" font-weight="bold" fill="#111">VHF Hi</text>
<path d="M214.6,760.3 V632.4 H482.5" fill="none" stroke="#111" stroke-width="1.8"/>
<path d="M524,632.4 H792.3 V760.3" fill="none" stroke="#111" stroke-width="1.8"/>
<text x="503.3" y="635.8" text-anchor="middle" font-size="11" font-weight="bold" fill="#111">UHF</text>
<text x="193.8" y="635.8" text-anchor="middle" font-size="10.7" fill="#111">dBm</text>
<text x="201.9" y="648.2" text-anchor="end" font-size="10.7" fill="#111">-10</text>
<text x="201.9" y="660.9" text-anchor="end" font-size="10.7" fill="#111">-20</text>
<text x="201.9" y="673.6" text-anchor="end" font-size="10.7" fill="#111">-30</text>
<text x="201.9" y="686.3" text-anchor="end" font-size="10.7" fill="#111">-40</text>
<text x="201.9" y="699.0" text-anchor="end" font-size="10.7" fill="#111">-50</text>
<text x="201.9" y="711.7" text-anchor="end" font-size="10.7" fill="#111">-60</text>
<text x="201.9" y="724.5" text-anchor="end" font-size="10.7" fill="#111">-70</text>
<text x="201.9" y="737.2" text-anchor="end" font-size="10.7" fill="#111">-80</text>
<text x="201.9" y="749.9" text-anchor="end" font-size="10.7" fill="#111">-90</text>
<text x="193.8" y="761.5" text-anchor="middle" font-size="9" fill="#444">Channel</text>
<line x1="7.5" y1="760.3" x2="173.2" y2="760.3" stroke="#111" stroke-width="1.9"/>
<line x1="214.6" y1="760.3" x2="792.3" y2="760.3" stroke="#111" stroke-width="1.9"/>
<rect x="10.0" y="756" width="7.0" height="9" fill="#fff"/>
<text x="13.5" y="762" text-anchor="middle" font-size="7" fill="#333">2</text>
<rect x="30.5" y="756" width="7.0" height="9" fill="#fff"/>
<text x="34.0" y="762" text-anchor="middle" font-size="7" fill="#333">4</text>
<rect x="52.0" y="756" width="7.0" height="9" fill="#fff"/>
<text x="55.5" y="762" text-anchor="middle" font-size="7" fill="#333">5</text>
<rect x="61.5" y="756" width="7.0" height="9" fill="#fff"/>
<text x="65.0" y="762" text-anchor="middle" font-size="7" fill="#333">6</text>
<rect x="102.5" y="756" width="7.0" height="9" fill="#fff"/>
<text x="106.0" y="762" text-anchor="middle" font-size="7" fill="#333">7</text>
<rect x="123.5" y="756" width="7.0" height="9" fill="#fff"/>
<text x="127.0" y="762" text-anchor="middle" font-size="7" fill="#333">9</text>
<rect x="142.1" y="756" width="11.0" height="9" fill="#fff"/>
<text x="147.6" y="762" text-anchor="middle" font-size="7" fill="#333">11</text>
<rect x="162.5" y="756" width="11.0" height="9" fill="#fff"/>
<text x="168.0" y="762" text-anchor="middle" font-size="7" fill="#333">13</text>
<rect x="214.5" y="756" width="11.0" height="9" fill="#fff"/>
<text x="220.0" y="762" text-anchor="middle" font-size="7" fill="#333">14</text>
<rect x="235.1" y="756" width="11.0" height="9" fill="#fff"/>
<text x="240.6" y="762" text-anchor="middle" font-size="7" fill="#333">16</text>
<rect x="266.0" y="756" width="11.0" height="9" fill="#fff"/>
<text x="271.5" y="762" text-anchor="middle" font-size="7" fill="#333">19</text>
<rect x="296.9" y="756" width="11.0" height="9" fill="#fff"/>
<text x="302.4" y="762" text-anchor="middle" font-size="7" fill="#333">22</text>
<rect x="327.9" y="756" width="11.0" height="9" fill="#fff"/>
<text x="333.4" y="762" text-anchor="middle" font-size="7" fill="#333">25</text>
<rect x="358.8" y="756" width="11.0" height="9" fill="#fff"/>
<text x="364.3" y="762" text-anchor="middle" font-size="7" fill="#333">28</text>
<rect x="389.7" y="756" width="11.0" height="9" fill="#fff"/>
<text x="395.2" y="762" text-anchor="middle" font-size="7" fill="#333">31</text>
<rect x="420.6" y="756" width="11.0" height="9" fill="#fff"/>
<text x="426.1" y="762" text-anchor="middle" font-size="7" fill="#333">34</text>
<rect x="451.5" y="756" width="11.0" height="9" fill="#fff"/>
<text x="457.0" y="762" text-anchor="middle" font-size="7" fill="#333">37</text>
<rect x="482.4" y="756" width="11.0" height="9" fill="#fff"/>
<text x="487.9" y="762" text-anchor="middle" font-size="7" fill="#333">40</text>
<rect x="513.3" y="756" width="11.0" height="9" fill="#fff"/>
<text x="518.8" y="762" text-anchor="middle" font-size="7" fill="#333">43</text>
<rect x="544.3" y="756" width="11.0" height="9" fill="#fff"/>
<text x="549.8" y="762" text-anchor="middle" font-size="7" fill="#333">46</text>
<rect x="575.2" y="756" width="11.0" height="9" fill="#fff"/>
<text x="580.7" y="762" text-anchor="middle" font-size="7" fill="#333">49</text>
<rect x="606.1" y="756" width="11.0" height="9" fill="#fff"/>
<text x="611.6" y="762" text-anchor="middle" font-size="7" fill="#333">52</text>
<rect x="637.0" y="756" width="11.0" height="9" fill="#fff"/>
<text x="642.5" y="762" text-anchor="middle" font-size="7" fill="#333">55</text>
<rect x="667.9" y="756" width="11.0" height="9" fill="#fff"/>
<text x="673.4" y="762" text-anchor="middle" font-size="7" fill="#333">58</text>
<rect x="698.8" y="756" width="11.0" height="9" fill="#fff"/>
<text x="704.3" y="762" text-anchor="middle" font-size="7" fill="#333">61</text>
<rect x="729.8" y="756" width="11.0" height="9" fill="#fff"/>
<text x="735.2" y="762" text-anchor="middle" font-size="7" fill="#333">64</text>
<rect x="760.7" y="756" width="11.0" height="9" fill="#fff"/>
<text x="766.2" y="762" text-anchor="middle" font-size="7" fill="#333">67</text>
<rect x="781.3" y="756" width="11.0" height="9" fill="#fff"/>
<text x="786.8" y="762" text-anchor="middle" font-size="7" fill="#333">69</text>
<rect x="58.3" y="726.7" width="12.4" height="6.8" rx="3.4" fill="#ffee00"/>
<rect x="60.1" y="728.4" width="8.8" height="3.4" rx="1" fill="#7a00e0"/>
<text transform="translate(67.8,724.9) rotate(-90)" font-size="9.4" fill="#7a00e0">XETV</text>
<rect x="99.8" y="739.6" width="12.4" height="6.8" rx="3.4" fill="#ffee00"/>
<rect x="101.6" y="741.3" width="8.8" height="3.4" rx="1" fill="#7a00e0"/>
<text transform="translate(109.3,737.8) rotate(-90)" font-size="9.4" fill="#7a00e0">KZTC-LP</text>
<rect x="151.8" y="733.0" width="12.4" height="6.8" rx="3.4" fill="#ffee00"/>
<rect x="153.6" y="734.7" width="8.8" height="3.4" rx="1" fill="#7a00e0"/>
<text transform="translate(161.3,731.2) rotate(-90)" font-size="9.4" fill="#7a00e0">XEWT</text>
<rect x="287.6" y="741.7" width="8.8" height="3.4" rx="1" fill="#7a00e0"/>
<text transform="translate(295.3,738.2) rotate(-90)" font-size="9.4" fill="#7a00e0">XHTIT-TV</text>
<rect x="339.6" y="731.2" width="8.8" height="3.4" rx="1" fill="#7a00e0"/>
<text transform="translate(347.3,727.7) rotate(-90)" font-size="9.4" fill="#7a00e0">K26FA</text>
</svg>
</body></html>
